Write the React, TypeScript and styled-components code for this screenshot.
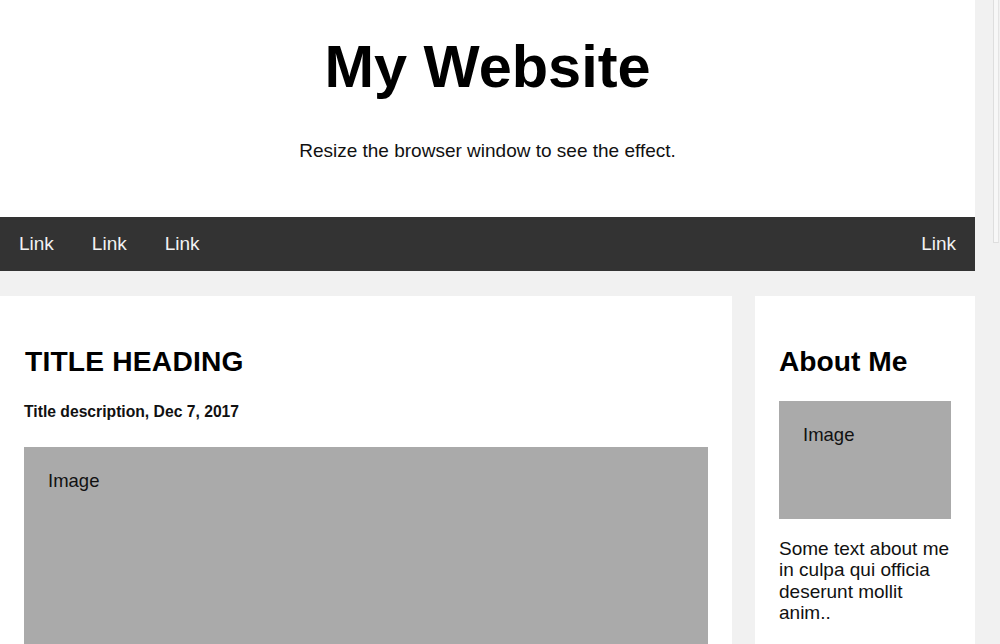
import styled, { createGlobalStyle } from 'styled-components';

const GlobalStyle = createGlobalStyle`
	html, body {
		margin: 0;
		padding: 0;
		height: 100%;
		overflow: hidden;
		background: #f1f1f1;
	}
	body {
		font-family: 'Liberation Sans', Arial, sans-serif;
		color: #000;
	}
`;

const Shell = styled.div`
	display: flex;
	width: 1000px;
	height: 644px;
	overflow: hidden;
`;

const Page = styled.div`
	width: 975px;
	flex: none;
	display: flex;
	flex-direction: column;
	background: #f1f1f1;
`;

const ScrollTrack = styled.div`
	flex: 1;
	display: flex;
	justify-content: flex-end;
	padding-right: 1px;
	background: #f1f1f1;
`;

const ScrollThumb = styled.div`
	width: 4px;
	height: 242px;
	background: #f7f7f7;
	border-left: 1px solid #dedede;
	border-right: 1px solid #e4e4e4;
	border-bottom: 1px solid #dedede;
`;

const Header = styled.header`
	padding: 32px 0 55px;
	text-align: center;
	background: #fff;
`;

const SiteTitle = styled.h1`
	margin: 0 0 39px;
	font-size: 59.5px;
	line-height: 69px;
	font-weight: bold;
`;

const Tagline = styled.p`
	margin: 0;
	font-size: 19px;
	line-height: 22px;
	color: #111;
`;

const TopNav = styled.nav`
	display: flex;
	background: #333;
`;

const NavLink = styled.a<{ $right?: boolean }>`
	display: block;
	padding: 16px 19px;
	font-size: 19px;
	line-height: 22px;
	color: #f2f2f2;
	text-decoration: none;
	margin-left: ${p => (p.$right ? 'auto' : '0')};
`;

const Columns = styled.div`
	display: grid;
	grid-template-columns: 732px 1fr;
	gap: 23px;
	margin-top: 25px;
	align-items: start;
`;

const Card = styled.div`
	background: #fff;
	padding: 24px;
	min-height: 400px;
`;

const CardTitle = styled.h2<{ $caps?: boolean }>`
	margin: 24.5px 0 24.5px;
	font-size: 28.2px;
	line-height: 32px;
	font-weight: bold;
	letter-spacing: ${p => (p.$caps ? '0.2px' : '0')};
	padding-left: ${p => (p.$caps ? '1px' : '0')};
`;

const PostMeta = styled.h5`
	margin: 26.5px 0 26px;
	font-size: 15.7px;
	line-height: 18px;
	font-weight: bold;
	color: #111;
`;

const FakeImage = styled.div<{ $height: number }>`
	height: ${p => p.$height}px;
	padding: 23px 24px;
	box-sizing: border-box;
	background: #aaa;
	font-size: 18.5px;
	line-height: 21px;
	color: #111;
`;

const AboutText = styled.p`
	margin: 19px 0 0;
	font-size: 19px;
	line-height: 21.3px;
	color: #111;
`;

export default function App() {
	return (
		<>
			<GlobalStyle />
			<Shell>
				<Page>
					<Header>
						<SiteTitle>My Website</SiteTitle>
						<Tagline>Resize the browser window to see the effect.</Tagline>
					</Header>
					<TopNav>
						<NavLink href="#">Link</NavLink>
						<NavLink href="#">Link</NavLink>
						<NavLink href="#">Link</NavLink>
						<NavLink href="#" $right>Link</NavLink>
					</TopNav>
					<Columns>
						<Card>
							<CardTitle $caps>TITLE HEADING</CardTitle>
							<PostMeta>Title description, Dec 7, 2017</PostMeta>
							<FakeImage $height={225}>Image</FakeImage>
						</Card>
						<Card>
							<CardTitle>About Me</CardTitle>
							<FakeImage $height={118}>Image</FakeImage>
							<AboutText>Some text about me in culpa qui officia deserunt mollit anim..</AboutText>
						</Card>
					</Columns>
				</Page>
				<ScrollTrack>
					<ScrollThumb />
				</ScrollTrack>
			</Shell>
		</>
	);
}
